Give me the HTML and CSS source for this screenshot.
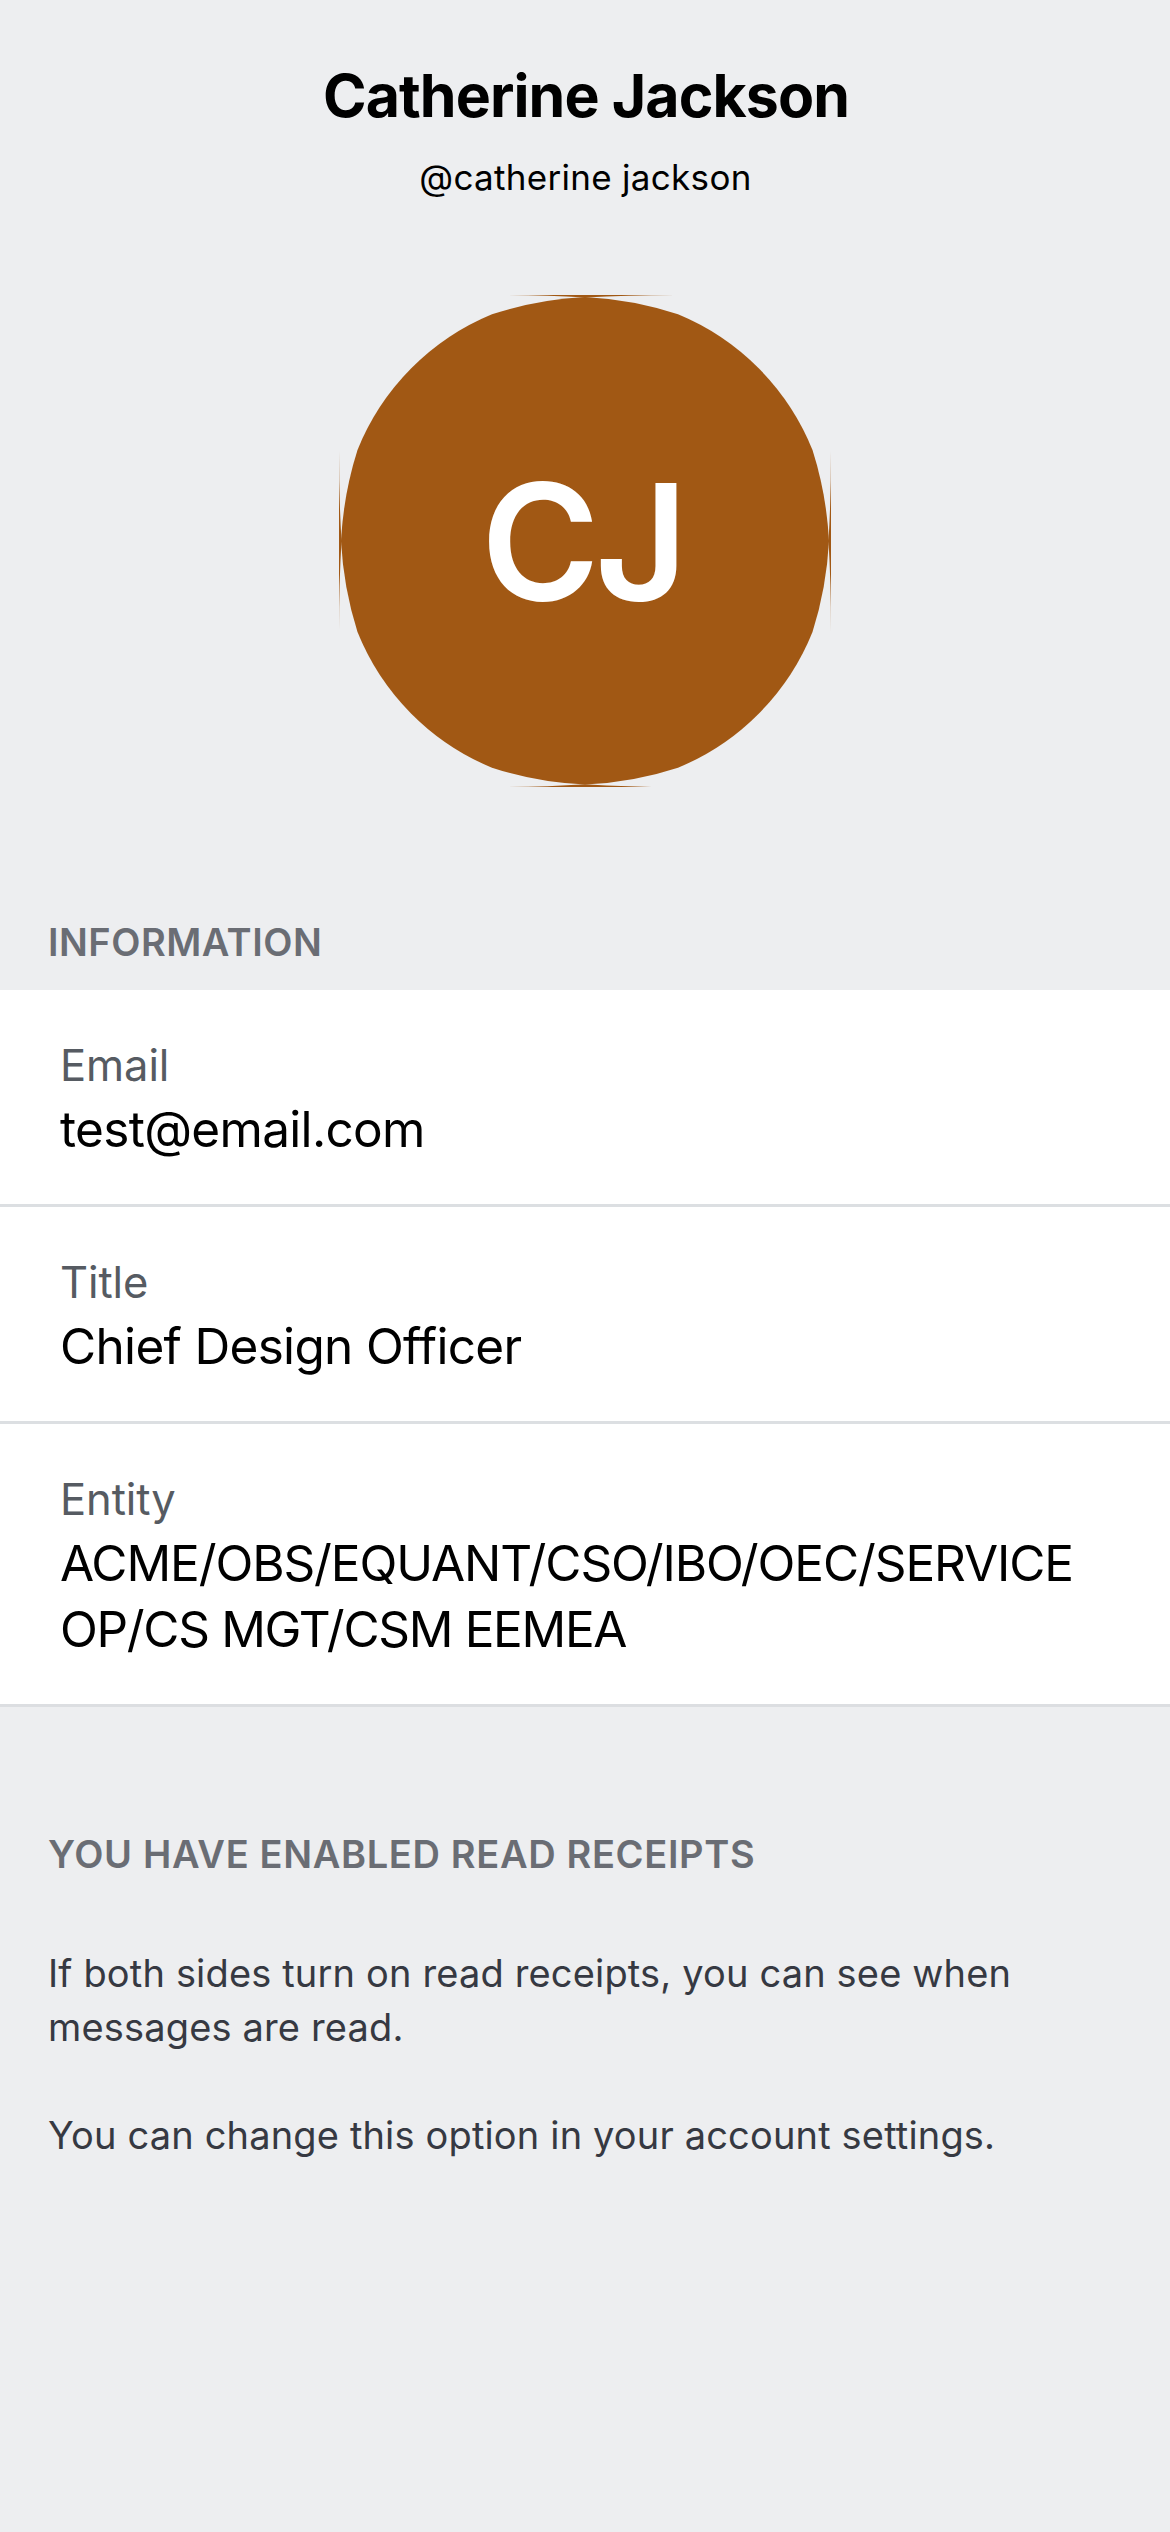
FILE: index.html
```html
<!DOCTYPE html>
<html lang="en">
<head>
<meta charset="utf-8">
<title>Catherine Jackson</title>
<link rel="stylesheet" href="styles.css">
</head>
<body>
<main class="profile">
  <header class="profile-header">
    <h1 class="name">Catherine Jackson</h1>
    <p class="handle">@catherine jackson</p>
    <div class="avatar">
      <svg class="avatar-shape" viewBox="-246 -246 492 492" aria-hidden="true">
        <path d="M0-244Q48-241.5 93-226.7A246 246 0 0 1 227.5-91Q241.5-47 244 0Q241.5 47 227.5 91A246 246 0 0 1 93 226.7Q48 241.5 0 243.5Q-48 241.5-93 226.7A246 246 0 0 1-227.5 91Q-241.5 47-244 0Q-241.5-47-227.5-91A246 246 0 0 1-93-226.7Q-48-241.5 0-244Z"/>
        <path d="M-90-246Q-42-246 0-243.5Q42-246 90-246ZM-90 246Q-42 246 0 243.2Q42 246 90 246ZM-246-90Q-246-42-243.5 0Q-246 42-246 90ZM246-90Q246-42 243.5 0Q246 42 246 90Z"/>
      </svg>
      <span class="initials">CJ</span>
    </div>
  </header>

  <section>
    <h2 class="section-title">INFORMATION</h2>
    <dl class="details">
      <div class="row">
        <dt class="label">Email</dt>
        <dd class="value">test@email.com</dd>
      </div>
      <div class="row">
        <dt class="label">Title</dt>
        <dd class="value">Chief Design Officer</dd>
      </div>
      <div class="row">
        <dt class="label">Entity</dt>
        <dd class="value value-caps">ACME/OBS/EQUANT/CSO/IBO/OEC/SERVICE<br><span class="value-tight">OP/CS MGT/CSM EEMEA</span></dd>
      </div>
    </dl>
  </section>

  <section class="receipts">
    <h2 class="section-title">YOU HAVE ENABLED READ RECEIPTS</h2>
    <div class="note">
      <p>If both sides turn on read receipts, you can see when<br>messages are read.</p>
      <p>You can change this option in your account settings.</p>
    </div>
  </section>
</main>
</body>
</html>
```
FILE: styles.css
```css
* {
  box-sizing: border-box;
  margin: 0;
  padding: 0;
}

body {
  background: #edeef0;
  color: #000;
  font-family: Inter, "Liberation Sans", sans-serif;
}

.profile {
  min-height: 2532px;
}

.profile-header {
  display: flex;
  flex-direction: column;
  align-items: center;
  padding: 60px 0 132px;
}

.name {
  padding-left: 2px;
  font-size: 59px;
  font-weight: 700;
  line-height: 72px;
  letter-spacing: -0.9px;
}

.handle {
  margin-top: 24px;
  padding-left: 1px;
  font-size: 35px;
  line-height: 42px;
  letter-spacing: 0.3px;
}

.avatar {
  display: grid;
  place-items: center;
  width: 492px;
  height: 492px;
  margin-top: 97px;
}

.avatar-shape,
.initials {
  grid-area: 1 / 1;
}

.avatar-shape {
  width: 492px;
  height: 492px;
  fill: #a15814;
}

.initials {
  padding: 2px 6px 0 0;
  color: #fff;
  font-size: 161px;
  font-weight: 600;
  line-height: 490px;
  letter-spacing: -5px;
}

.section-title {
  padding: 0 48px 25px;
  color: #6a6d74;
  font-size: 38px;
  font-weight: 600;
  line-height: 46px;
  letter-spacing: 0.5px;
}

.row {
  padding: 48px 60px 42px;
  background: #fff;
  border-bottom: 3px solid #dcdfe2;
}

.row:last-child {
  border-color: #dcdee1;
}

.label {
  color: #565b62;
  font-size: 43.5px;
  line-height: 54px;
  letter-spacing: -0.1px;
}

.value {
  margin-top: 4px;
  font-size: 49.5px;
  line-height: 66px;
  letter-spacing: -0.68px;
}

.value-caps {
  letter-spacing: -1.1px;
  white-space: nowrap;
}

.value-tight {
  letter-spacing: -1.32px;
}

.receipts {
  padding-top: 124px;
}

.receipts .section-title {
  letter-spacing: 0.65px;
}

.note {
  display: flex;
  flex-direction: column;
  gap: 54px;
  padding: 44px 48px 0;
  color: #363942;
  font-size: 38px;
  line-height: 54px;
  letter-spacing: 0.16px;
}
```
